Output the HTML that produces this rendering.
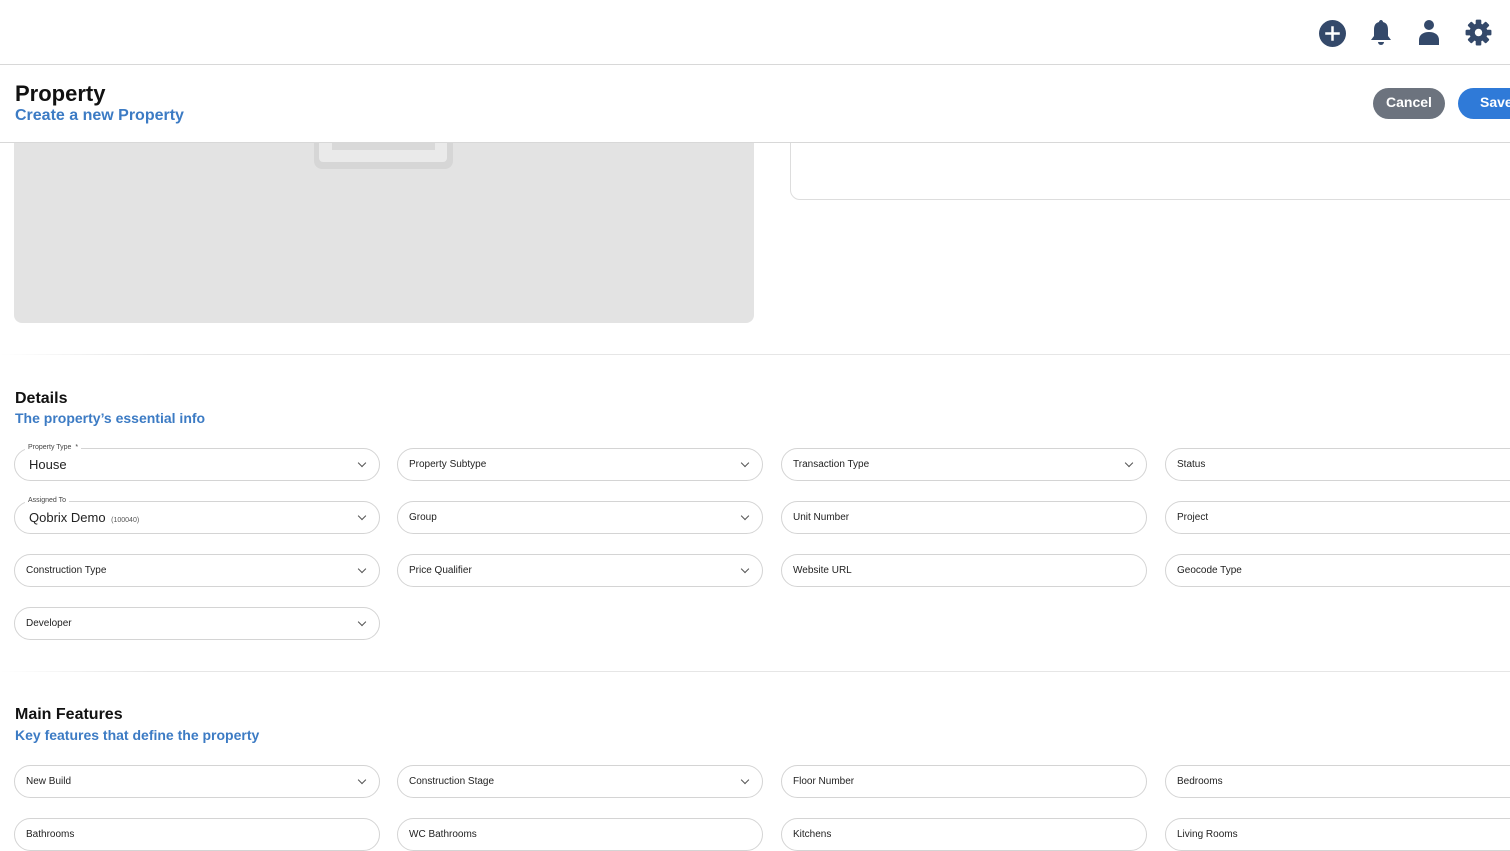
<!DOCTYPE html>
<html><head><style>
*{box-sizing:border-box;margin:0;padding:0}
body{width:1510px;height:844px;overflow:hidden;background:#fff;font-family:"Liberation Sans",Arial,sans-serif;position:relative}
.abs{position:absolute}
.f{position:absolute;width:366px;height:33px;border:1px solid #d4d4d4;border-radius:17px;font-size:10px;color:#222;padding-left:11px;line-height:32px}
.f.dd::after{content:"";position:absolute;right:14px;top:11px;width:5px;height:5px;border-right:1.5px solid #555;border-bottom:1.5px solid #555;transform:rotate(45deg)}
.lbl{position:absolute;top:-6px;left:10px;background:#fff;font-size:7px;line-height:10px;padding:0 3px;color:#444}
.h2{font-size:16px;font-weight:bold;color:#111}
.sub{font-size:14px;font-weight:bold;color:#3c7bc4}
.sep{position:absolute;left:0;width:1510px;height:1px;background:linear-gradient(to right,#fff,#e6e6e6 10%,#e6e6e6)}
</style></head><body>
<div class="abs" style="left:0;top:64px;width:1510px;height:1px;background:#d8d8d8"></div>
<svg class="abs" style="left:1319px;top:20px" width="27" height="27" viewBox="0 0 26 26"><circle cx="13" cy="13" r="13" fill="#34496a"/><path d="M13 6v14M6 13h14" stroke="#fff" stroke-width="2.4"/></svg>
<svg class="abs" style="left:1369px;top:18px" width="24" height="28" viewBox="0 0 24 28"><path d="M12 2c-1 0-2 1-2 2C6 5 5 8 5 12v6l-3 4h20l-3-4v-6c0-4-1-7-5-8 0-1-1-2-2-2z" fill="#34496a"/><path d="M9 24a3 3 0 0 0 6 0z" fill="#34496a"/></svg>
<svg class="abs" style="left:1417px;top:19px" width="24" height="27" viewBox="0 0 24 27"><circle cx="12" cy="6" r="5" fill="#34496a"/><path d="M2 26v-5c0-5 4-8 10-8s10 3 10 8v5z" fill="#34496a"/></svg>
<svg class="abs" style="left:1465px;top:19px" width="27" height="27" viewBox="0 0 24 24"><g fill="#34496a"><circle cx="12" cy="12" r="8"/><g id="t"><rect x="9.5" y="0.5" width="5" height="5" rx="1"/><rect x="9.5" y="18.5" width="5" height="5" rx="1"/></g><use href="#t" transform="rotate(45 12 12)"/><use href="#t" transform="rotate(90 12 12)"/><use href="#t" transform="rotate(135 12 12)"/></g><circle cx="12" cy="12" r="3.3" fill="#fff"/></svg>
<div class="abs" style="left:14px;top:100px;width:740px;height:223px;background:#e3e3e3;border-radius:0 0 8px 8px"></div>
<div class="abs" style="left:314px;top:120px;width:139px;height:49px;background:#d6d6d6;border-radius:8px"></div>
<div class="abs" style="left:319px;top:120px;width:128px;height:42px;background:#eaeaea;border-radius:4px"></div>
<div class="abs" style="left:332px;top:120px;width:103px;height:30px;background:#d9d9d9"></div>
<div class="abs" style="left:790px;top:100px;width:740px;height:100px;border:1px solid #ddd;border-radius:10px"></div>
<div class="abs" style="left:0;top:65px;width:1510px;height:78px;background:#fff;border-bottom:1px solid #d8d8d8"></div>
<div class="abs h2" style="left:15px;top:81px;font-size:22px">Property</div>
<div class="abs sub" style="left:15px;top:107px;font-size:16px">Create a new Property</div>
<div class="abs" style="left:1373px;top:88px;width:72px;height:31px;border-radius:16px;background:#6c737e;color:#fff;font-weight:bold;font-size:14px;text-align:center;line-height:29px">Cancel</div>
<div class="abs" style="left:1458px;top:88px;width:80px;height:31px;border-radius:16px;background:#2f7ad8;color:#fff;font-weight:bold;font-size:14px;line-height:29px;padding-left:22px">Save</div>
<div class="sep" style="top:354px"></div>
<div class="abs h2" style="left:15px;top:390px">Details</div>
<div class="abs sub" style="left:15px;top:410px">The property’s essential info</div>
<div class="f dd" style="left:14px;top:448px;font-size:13px;padding-left:14px;line-height:31px"><span class="lbl">Property Type &nbsp;*</span>House</div>
<div class="f dd" style="left:397px;top:448px">Property Subtype</div>
<div class="f dd" style="left:781px;top:448px">Transaction Type</div>
<div class="f" style="left:1165px;top:448px">Status</div>
<div class="f dd" style="left:14px;top:501px;font-size:13px;padding-left:14px;line-height:31px"><span class="lbl">Assigned To</span>Qobrix Demo <span style="font-size:7px;color:#555">&nbsp;(100040)</span></div>
<div class="f dd" style="left:397px;top:501px">Group</div>
<div class="f" style="left:781px;top:501px">Unit Number</div>
<div class="f" style="left:1165px;top:501px">Project</div>
<div class="f dd" style="left:14px;top:554px">Construction Type</div>
<div class="f dd" style="left:397px;top:554px">Price Qualifier</div>
<div class="f" style="left:781px;top:554px">Website URL</div>
<div class="f" style="left:1165px;top:554px">Geocode Type</div>
<div class="f dd" style="left:14px;top:607px">Developer</div>
<div class="sep" style="top:671px"></div>
<div class="abs h2" style="left:15px;top:706px">Main Features</div>
<div class="abs sub" style="left:15px;top:727px">Key features that define the property</div>
<div class="f dd" style="left:14px;top:765px">New Build</div>
<div class="f dd" style="left:397px;top:765px">Construction Stage</div>
<div class="f" style="left:781px;top:765px">Floor Number</div>
<div class="f" style="left:1165px;top:765px">Bedrooms</div>
<div class="f" style="left:14px;top:818px">Bathrooms</div>
<div class="f" style="left:397px;top:818px">WC Bathrooms</div>
<div class="f" style="left:781px;top:818px">Kitchens</div>
<div class="f" style="left:1165px;top:818px">Living Rooms</div>
</body></html>
